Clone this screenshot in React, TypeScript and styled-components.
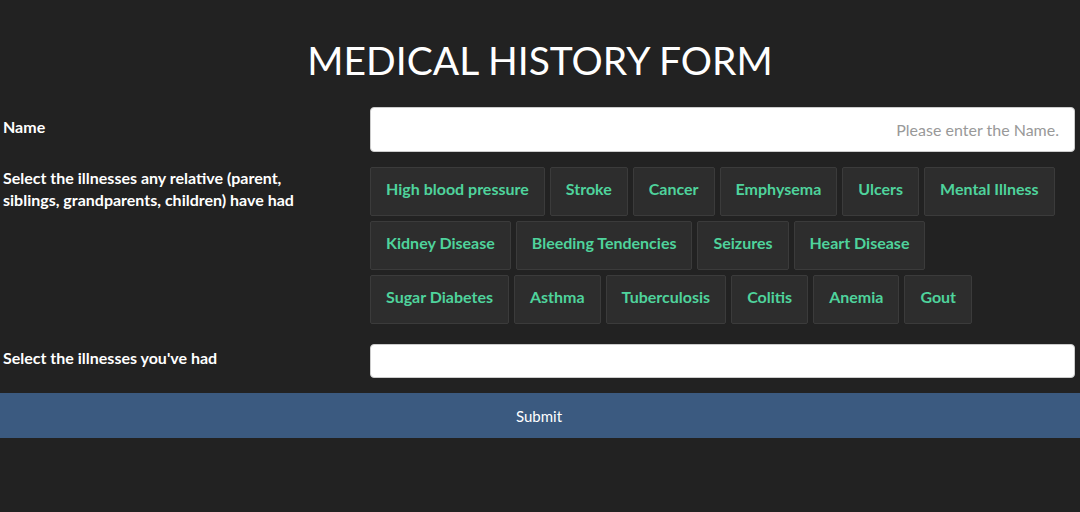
import styled, { createGlobalStyle } from "styled-components";

const GlobalStyle = createGlobalStyle`
  html, body {
    margin: 0;
    padding: 0;
    background-color: #222222;
    font-family: Lato, "Open Sans", sans-serif;
  }
`;

const Page = styled.div`
  box-sizing: border-box;
  min-height: 100vh;
  padding-top: 36px;
  background-color: #222222;
  color: #ffffff;
`;

const Title = styled.h1`
  margin: 0 0 23px;
  font-size: 39px;
  line-height: 48px;
  font-weight: 400;
  text-align: center;
  color: #ffffff;
`;

const Form = styled.form`
  display: flex;
  flex-direction: column;
`;

const Row = styled.div<{ $align?: string; $gap?: number }>`
  display: grid;
  grid-template-columns: 370px 1fr;
  align-items: ${(p) => p.$align || "center"};
  padding-right: 5px;
  margin-bottom: ${(p) => p.$gap ?? 15}px;
`;

const Label = styled.label<{ $offset?: number }>`
  display: block;
  max-width: 300px;
  padding-left: 3px;
  margin-top: ${(p) => p.$offset ?? 0}px;
  font-size: 16px;
  line-height: 22px;
  font-weight: 700;
  color: #ffffff;
`;

const TextInput = styled.input<{ $height: number }>`
  box-sizing: border-box;
  width: 100%;
  height: ${(p) => p.$height}px;
  padding: 0 15px;
  border: 1px solid #cccccc;
  border-radius: 4px;
  background: #ffffff;
  font-family: Lato, sans-serif;
  font-size: 16px;
  text-align: right;
  outline: none;

  &::placeholder {
    color: #999999;
  }
`;

const Options = styled.div`
  display: flex;
  flex-wrap: wrap;
  padding-right: 10px;
`;

const Option = styled.button`
  margin: 0 5px 5px 0;
  padding: 11px 15px 17px;
  border: 1px solid #3b3b3b;
  border-radius: 2px;
  background-color: #2d2d2d;
  color: #4fd39c;
  font-family: Lato, sans-serif;
  font-size: 16px;
  line-height: 19px;
  font-weight: 700;
  cursor: pointer;

  &:hover {
    background-color: #353535;
  }
`;

const Submit = styled.button`
  display: block;
  width: 100%;
  height: 45px;
  padding: 0 2px 0 0;
  border: none;
  background-color: #3b5a80;
  color: #ffffff;
  font-family: Lato, sans-serif;
  font-size: 15px;
  cursor: pointer;
`;

const illnesses = [
  "High blood pressure",
  "Stroke",
  "Cancer",
  "Emphysema",
  "Ulcers",
  "Mental Illness",
  "Kidney Disease",
  "Bleeding Tendencies",
  "Seizures",
  "Heart Disease",
  "Sugar Diabetes",
  "Asthma",
  "Tuberculosis",
  "Colitis",
  "Anemia",
  "Gout",
];

const App = () => {
  return (
    <Page>
      <GlobalStyle />
      <Title>MEDICAL HISTORY FORM</Title>
      <Form onSubmit={(e) => e.preventDefault()}>
        <Row>
          <Label $offset={-5}>Name</Label>
          <TextInput $height={45} placeholder="Please enter the Name." />
        </Row>
        <Row $align="start" $gap={15}>
          <Label $offset={0}>
            Select the illnesses any relative (parent, siblings, grandparents,
            children) have had
          </Label>
          <Options>
            {illnesses.map((name) => (
              <Option key={name} type="button">
                {name}
              </Option>
            ))}
          </Options>
        </Row>
        <Row>
          <Label $offset={-6}>Select the illnesses you've had</Label>
          <TextInput $height={34} />
        </Row>
        <Submit type="submit">Submit</Submit>
      </Form>
    </Page>
  );
};

export default App;
